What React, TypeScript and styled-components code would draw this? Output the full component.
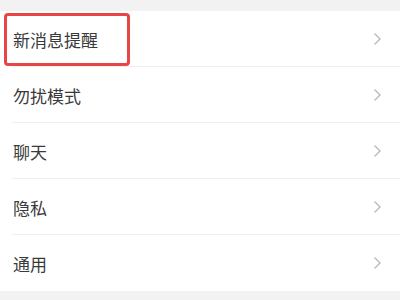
import styled, { createGlobalStyle } from "styled-components";

const GlobalStyle = createGlobalStyle`
  body {
    margin: 0;
    background: #f2f2f2;
    font-family: "Noto Sans CJK SC", "Noto Sans", sans-serif;
  }
`;

const items = ["新消息提醒", "勿扰模式", "聊天", "隐私", "通用"];

function Chevron() {
  return (
    <svg width="10" height="16" viewBox="0 0 10 16">
      <path d="M2.5 2.5 L8 8 L2.5 13.5" fill="none" stroke="#bababa" strokeWidth="1.4" />
    </svg>
  );
}

function App() {
  return (
    <>
      <GlobalStyle />
      <Page>
        <List>
          {items.map((label, i) => (
            <Row key={label} $last={i === items.length - 1}>
              {i === 0 && <Highlight />}
              <Label>{label}</Label>
              <Chevron />
            </Row>
          ))}
        </List>
      </Page>
    </>
  );
}

const Page = styled.div`
  padding-top: 11px;
  height: 300px;
  box-sizing: border-box;
`;

const List = styled.div`
  background: #ffffff;
  display: flex;
  flex-direction: column;
`;

const Row = styled.div<{ $last: boolean }>`
  position: relative;
  height: 56px;
  display: flex;
  align-items: center;
  justify-content: space-between;
  padding: 0 18px 0 13px;
  &::after {
    content: "";
    display: ${(p) => (p.$last ? "none" : "block")};
    position: absolute;
    left: 12px;
    right: 0;
    bottom: 0;
    height: 1px;
    background: #efefef;
  }
`;

const Label = styled.span`
  font-size: 17px;
  color: #3a3a3a;
`;

const Highlight = styled.div`
  position: absolute;
  left: 4px;
  top: 2px;
  width: 126px;
  height: 53px;
  box-sizing: border-box;
  border: 3px solid #e94545;
  border-radius: 4px;
  pointer-events: none;
`;

export default App;
